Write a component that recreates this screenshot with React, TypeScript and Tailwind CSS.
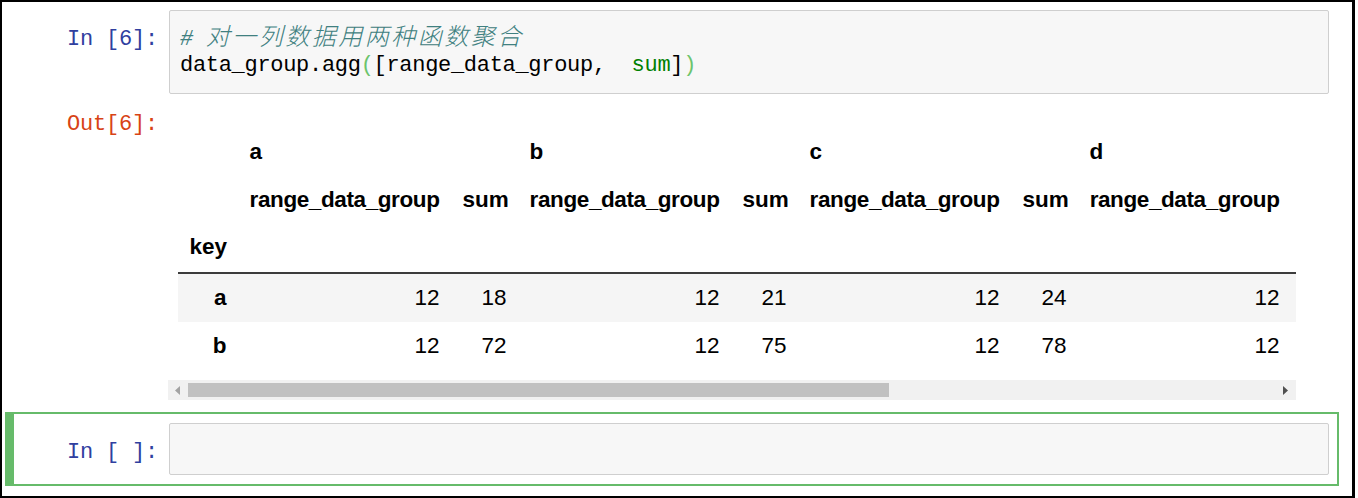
import React from "react";

const mono = "font-['Liberation_Mono','Noto_Sans_CJK_SC',monospace]";
const sans = "font-['Liberation_Sans',Arial,sans-serif]";

const colWidths = [60, 213, 67, 213, 67, 213, 67, 213, 67];
const groups = ["a", "b", "c", "d"];
const rows = [
  { idx: "a", vals: ["12", "18", "12", "21", "12", "24", "12", ""] },
  { idx: "b", vals: ["12", "72", "12", "75", "12", "78", "12", ""] },
];

function Table() {
  return (
    <table className={`table-fixed border-separate border-spacing-0 text-[22.5px] text-black ${sans}`} style={{ width: 1180 }}>
      <colgroup>
        {colWidths.map((w, i) => (
          <col key={i} style={{ width: w }} />
        ))}
      </colgroup>
      <thead>
        <tr className="h-[48px]">
          <th className="px-[11.5px]"></th>
          {groups.map((g) => (
            <th key={g} colSpan={2} className="px-[11.5px] text-left font-bold">
              {g}
            </th>
          ))}
        </tr>
        <tr className="h-[48px]">
          <th className="px-[11.5px]"></th>
          {groups.map((g, gi) => (
            <React.Fragment key={g}>
              <th className="px-[11.5px] text-right font-bold tracking-[-0.4px] whitespace-nowrap">range_data_group</th>
              <th className="px-[11.5px] text-right font-bold">{gi < 3 ? "sum" : ""}</th>
            </React.Fragment>
          ))}
        </tr>
        <tr className="h-[50px]">
          <th className="px-[11.5px] text-left font-bold border-b-2 border-[#3c3c3c] pb-[2px]">key</th>
          {Array.from({ length: 8 }).map((_, i) => (
            <th key={i} className="border-b-2 border-[#3c3c3c]"></th>
          ))}
        </tr>
      </thead>
      <tbody>
        {rows.map((r, ri) => (
          <tr key={r.idx} className={`h-[48px] ${ri === 0 ? "bg-[#f5f5f5]" : "bg-white"}`}>
            <th className="px-[11.5px] text-right font-bold">{r.idx}</th>
            {r.vals.map((v, i) => (
              <td key={i} className="px-[11.5px] text-right font-normal">
                {v}
              </td>
            ))}
          </tr>
        ))}
      </tbody>
    </table>
  );
}

function Scrollbar() {
  return (
    <div className="flex h-[20px] w-[1128px] items-center bg-[#f1f1f1]">
      <div className="flex h-[20px] w-[20px] items-center justify-center">
        <svg width="6" height="9" viewBox="0 0 6 9">
          <path d="M5 0 L0 4.5 L5 9 Z" fill="#a3a3a3" />
        </svg>
      </div>
      <div className="h-[14px] w-[701px] bg-[#c1c1c1]"></div>
      <div className="flex-1"></div>
      <div className="flex h-[20px] w-[20px] items-center justify-center">
        <svg width="6" height="9" viewBox="0 0 6 9">
          <path d="M0 0 L5 4.5 L0 9 Z" fill="#505050" />
        </svg>
      </div>
    </div>
  );
}

export default function App() {
  return (
    <div className="h-[498px] w-[1355px] overflow-hidden border-b-2 border-l-2 border-r-[3px] border-t-2 border-black bg-white">
      {/* Cell 1 */}
      <div className="ml-[3px] w-[1334px] border border-transparent pt-[7px]">
        <div className="flex">
          <div className={`w-[163px] shrink-0 pr-[11px] pt-[17px] text-right text-[22px] leading-[26px] tracking-[-0.2px] text-[#303f9f] ${mono}`}>
            In [6]:
          </div>
          <div className={`h-[84px] w-[1160px] rounded-[2px] border border-[#cfcfcf] bg-[#f7f7f7] px-[10px] pt-[16px] text-[22px] leading-[26px] tracking-[-0.3px] text-black ${mono}`}>
            <div className="h-[26px] whitespace-pre italic text-[#408080]">
              {"# "}
              <span className="font-['Noto_Sans_CJK_SC',sans-serif] text-[24px] font-light leading-[14px] tracking-[2.5px]">对一列数据用两种函数聚合</span>
            </div>
            <div className="h-[26px] whitespace-pre">
              data_group.agg<span className="text-[#6cc46c]">(</span>[range_data_group,{"  "}
              <span className="text-[#008000]">sum</span>]<span className="text-[#6cc46c]">)</span>
            </div>
          </div>
        </div>
        <div className="flex">
          <div className={`w-[162px] shrink-0 pr-[10px] pt-[18px] text-right text-[22px] leading-[26px] tracking-[-0.2px] text-[#d84315] ${mono}`}>
            Out[6]:
          </div>
          <div className="w-[1128px] pt-[34px]">
            <div className="w-[1128px] overflow-hidden pl-[10px]">
              <Table />
            </div>
            <div className="mt-[10px]">
              <Scrollbar />
            </div>
          </div>
        </div>
      </div>
      {/* Cell 2 (selected) */}
      <div className="relative ml-[3px] mt-[11px] w-[1334px] border-2 border-[#66bb6a] pb-[9px] pt-[9px]">
        <div className="absolute bottom-[-2px] left-[-2px] top-[-2px] w-[9px] bg-[#66bb6a]"></div>
        <div className="flex">
          <div className={`w-[162px] shrink-0 pr-[11px] pt-[17px] text-right text-[22px] leading-[26px] tracking-[-0.2px] text-[#303f9f] ${mono}`}>
            In [ ]:
          </div>
          <div className="h-[52px] w-[1160px] rounded-[2px] border border-[#cfcfcf] bg-[#f7f7f7]"></div>
        </div>
      </div>
    </div>
  );
}
